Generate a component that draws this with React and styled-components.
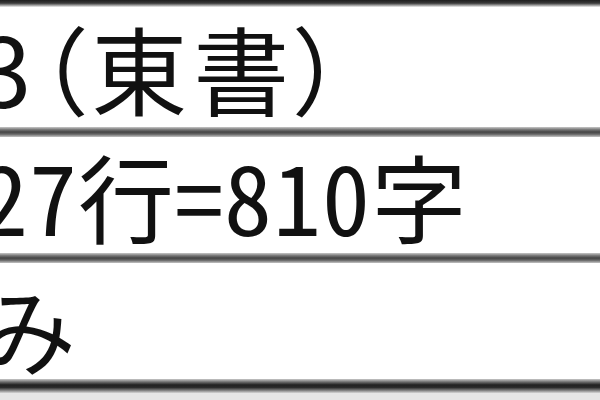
import React from "react";
import styled, { createGlobalStyle } from "styled-components";

const Global = createGlobalStyle`
  html, body { margin: 0; padding: 0; background: #e6e6e6; }
  #root { width: 600px; height: 400px; }
`;

const Frame = styled.div`
  width: 600px;
  height: 400px;
  overflow: hidden;
  background: #e6e6e6;
  display: flex;
  flex-direction: column;
`;

const Sheet = styled.div`
  display: flex;
  flex-direction: column;
  background: #fff;
`;

const Rule = styled.div`
  height: ${(p) => p.$h}px;
  flex: none;
  background: ${(p) =>
    p.$edge === "top"
      ? "linear-gradient(to bottom, #1e1e1e 0%, #3a3a3a 45%, #9a9a9a 75%, #f0f0f0 100%)"
      : p.$edge === "bottom"
      ? "linear-gradient(to bottom, #c8c8c8 0%, #6a6a6a 22%, #222 42%, #2a2a2a 60%, #7a7a7a 80%, #d6d6d6 100%)"
      : "linear-gradient(to bottom, #c8c8c8 0%, #7a7a7a 25%, #444 50%, #666 72%, #c4c4c4 100%)"};
`;

const Row = styled.div`
  height: ${(p) => p.$h}px;
  display: flex;
  align-items: center;
  padding-top: ${(p) => p.$pt || 0}px;
  box-sizing: border-box;
`;

const Text = styled.div`
  font-family: "Noto Sans CJK JP", "Noto Sans", sans-serif;
  font-size: 96px;
  line-height: 1;
  color: #111;
  white-space: nowrap;
  text-indent: ${(p) => p.$indent}px;
  letter-spacing: ${(p) => p.$ls || 0}px;
  font-feature-settings: ${(p) => p.$feat || "normal"};
  filter: blur(0.7px);
`;

export default function App() {
  return (
    <>
      <Global />
      <Frame>
        <Sheet>
          <Rule $h={7} $edge="top" />
          <Row $h={120} $pt={-6}>
            <Text $indent={-22} $ls={6} $feat='"palt" 1'>3（東書）</Text>
          </Row>
          <Rule $h={10} />
          <Row $h={116} $pt={-6}>
            <Text $indent={-20} $ls={1} $feat='"hwid" 1'>27行=810字</Text>
          </Row>
          <Rule $h={10} />
          <Row $h={116} $pt={12}>
            <Text $indent={-20}>み</Text>
          </Row>
          <Rule $h={14} $edge="bottom" />
        </Sheet>
      </Frame>
    </>
  );
}
